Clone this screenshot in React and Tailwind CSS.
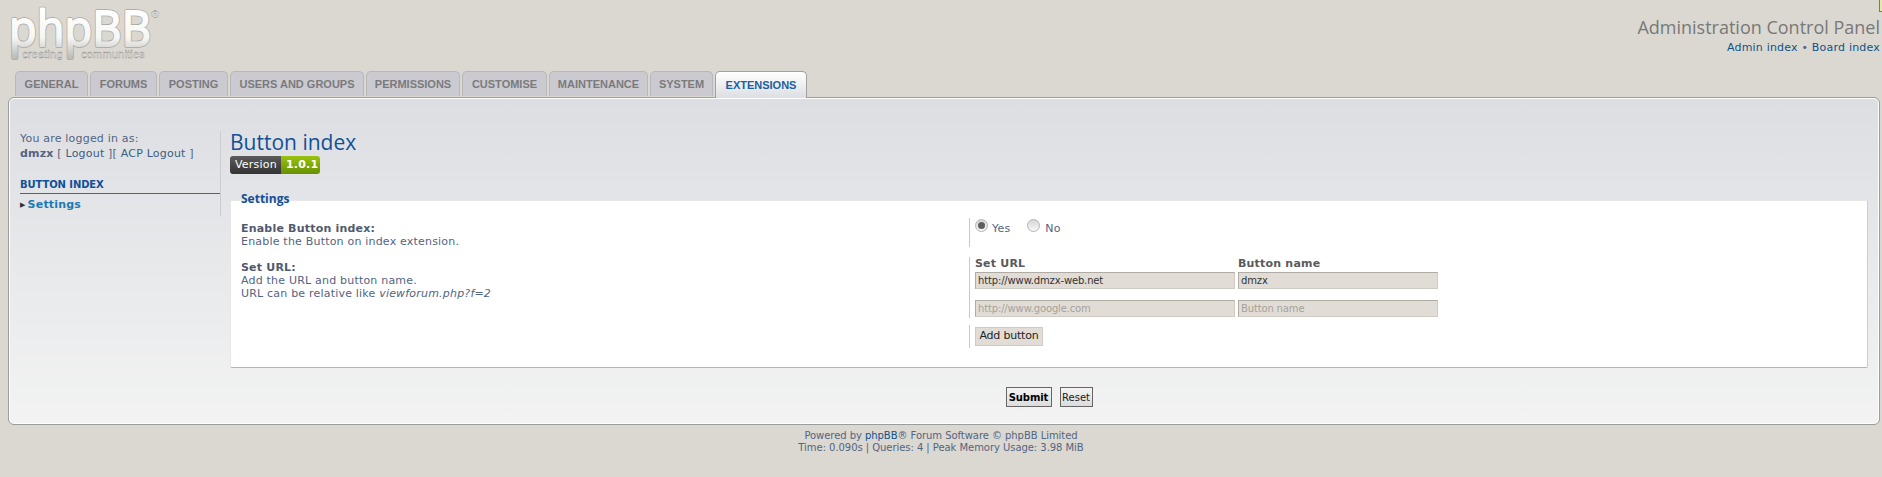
const tabs = [
  { label: 'GENERAL', w: 'w-[73px]' },
  { label: 'FORUMS', w: 'w-[67px]' },
  { label: 'POSTING', w: 'w-[69px]' },
  { label: 'USERS AND GROUPS', w: 'w-[134px]' },
  { label: 'PERMISSIONS', w: 'w-[94px]' },
  { label: 'CUSTOMISE', w: 'w-[85px]' },
  { label: 'MAINTENANCE', w: 'w-[99px]' },
  { label: 'SYSTEM', w: 'w-[63px]' },
];

function Logo() {
  const letters = { x: 8, y: 45, fontFamily: "'Open Sans', sans-serif", fontSize: 50, textLength: 142, lengthAdjust: 'spacingAndGlyphs' };
  const tag = { y: 57, fontFamily: "'Liberation Sans', sans-serif", fontSize: 11, fill: '#ffffff', stroke: '#8d8c88', strokeWidth: 0.4 };
  return (
    <svg width="170" height="62" viewBox="0 0 170 62" className="block">
      <defs>
        <linearGradient id="logoFill" gradientUnits="userSpaceOnUse" x1="0" y1="8" x2="0" y2="56">
          <stop offset="0" stopColor="#ffffff" />
          <stop offset="0.6" stopColor="#f6f6f5" />
          <stop offset="1" stopColor="#bdbdbb" />
        </linearGradient>
      </defs>
      <text {...letters} fill="none" stroke="#a8a7a2" strokeWidth="3.6" strokeLinejoin="round">phpBB</text>
      <text {...letters} fill="url(#logoFill)" stroke="url(#logoFill)" strokeWidth="2" strokeLinejoin="round">phpBB</text>
      <text x="150" y="17" fontFamily="'Liberation Sans', sans-serif" fontSize="11" fill="#ffffff" stroke="#a9a8a3" strokeWidth="0.3">®</text>
      <text {...tag} x="21">creating</text>
      <text {...tag} x="80">communities</text>
    </svg>
  );
}

function Radio({ checked }) {
  return (
    <span className="flex h-[13px] w-[13px] items-center justify-center rounded-full border border-[#b4b4b4] bg-gradient-to-b from-[#d6d6d6] to-[#f8f8f8]">
      {checked && <span className="h-[7px] w-[7px] rounded-full bg-[#5f5f5f]" />}
    </span>
  );
}

function TextBox({ value, width, muted }) {
  return (
    <div className={`flex h-[17px] items-center border border-t-[#b0aca4] border-l-[#b0aca4] border-r-[#cfcbc3] border-b-[#cfcbc3] bg-[#e1ddd6] px-[2px] text-[10px] tracking-[-0.15px] ${width} ${muted ? 'text-[#a5a29c]' : 'text-[#333333]'}`}>
      {value}
    </div>
  );
}

export default function App() {
  return (
    <div className="relative h-[477px] w-[1882px] overflow-hidden bg-[#dbd8d1] font-['DejaVu_Sans',sans-serif] text-[11px] tracking-[0.2px] text-[#536482]">
      <div className="absolute right-0 top-0 h-[12px] w-[3px] border-l border-b border-[#777777] bg-[#e8e8a0]" />

      <header className="flex h-[71px] justify-between pl-[1px] pr-[2px]">
        <div className="pt-[1px]"><Logo /></div>
        <div className="pt-[16px] text-right">
          <div className="font-['Open_Sans',sans-serif] text-[18px] leading-[22px] tracking-normal text-[#787878]">Administration Control Panel</div>
          <div className="mt-[3px] text-[11px] leading-[13px] text-[#105289]">Admin index <span className="text-[#536482]">•</span> Board index</div>
        </div>
      </header>

      <nav className="relative z-10 flex h-[26px] gap-[2px] pl-[15px]">
        {tabs.map((tab) => (
          <div key={tab.label} className={`flex h-[25px] items-center justify-center rounded-t-[5px] border border-b-0 border-[#b8b8b8] bg-[#cacad0] font-['Liberation_Sans',sans-serif] text-[11px] font-bold tracking-normal text-[#7a7a7d] ${tab.w}`}>
            {tab.label}
          </div>
        ))}
        <div className="flex h-[27px] w-[92px] items-center justify-center rounded-t-[5px] border border-b-0 border-[#a0a0a0] bg-gradient-to-b from-[#ffffff] to-[#dcdee2] font-['Liberation_Sans',sans-serif] text-[11px] font-bold tracking-normal text-[#1b5fa5]">
          EXTENSIONS
        </div>
      </nav>

      <main className="ml-[8px] mr-[2px] flex h-[328px] rounded-[6px] border border-[#9c9c9c] bg-gradient-to-b from-[#dcdee2] to-[#f3f3f3] pr-[11px] pt-[33px] shadow-[inset_0_0_0_1px_#ffffff]">
        <aside className="h-[85px] w-[212px] shrink-0 border-r border-[#c9ccd0] pl-[11px]">
          <div className="text-[11px] leading-[15px]">You are logged in as:</div>
          <div className="leading-[15px]">
            <span className="font-bold">dmzx</span> [ <span className="text-[#3c5d7f]">Logout</span> ][ <span className="text-[#3c5d7f]">ACP Logout</span> ]
          </div>
          <div className="mt-[17px] border-b border-[#2f6c9f] pb-[2px] text-[10px] font-bold leading-[13px] tracking-[-0.1px] text-[#115098]">BUTTON INDEX</div>
          <div className="mt-[3px] flex items-center gap-[2px] font-bold leading-[16px] text-[#1d7ab3]">
            <span className="text-[7px] text-[#333333]">▶</span>Settings
          </div>
        </aside>

        <section className="ml-[9px] min-w-0 flex-1">
          <h1 className="-mt-[2px] font-['Open_Sans',sans-serif] text-[21px] font-normal leading-[26px] tracking-normal text-[#115098]">Button index</h1>
          <div className="mt-[1px] flex h-[18px] w-[90px] overflow-hidden rounded-[3px] text-[11px] font-normal leading-[18px] text-white">
            <span className="w-[51px] bg-gradient-to-b from-[#5b5b5b] to-[#333333] pl-[5px]">Version</span>
            <span className="flex-1 bg-gradient-to-b from-[#9ac30e] to-[#679000] pl-[5px] font-bold">1.0.1</span>
          </div>

          <div className="relative mt-[26px] h-[168px] rounded-[2px] border border-b-[#b4b4b4] border-r-[#cdcdcd] border-t-[#e6e6e6] border-l-[#e6e6e6] bg-white">
            <div className="absolute -top-[10px] left-[10px] font-['Open_Sans',sans-serif] text-[12px] font-bold leading-[16px] tracking-normal text-[#115098]">Settings</div>

            <div className="flex pl-[10px] pt-[17px]">
              <div className="w-[728px] shrink-0 leading-[13px]">
                <div className="mt-[4px] font-bold text-[#4f5a6e]">Enable Button index:</div>
                <div>Enable the Button on index extension.</div>
                <div className="mt-[13px] font-bold text-[#4f5a6e]">Set URL:</div>
                <div>Add the URL and button name.</div>
                <div>URL can be relative like <em>viewforum.php?f=2</em></div>
              </div>

              <div className="min-w-0 flex-1">
                <div className="flex h-[29px] items-start border-l border-[#c9c9c9] pl-[5px] pt-[1px]">
                  <Radio checked />
                  <span className="ml-[4px] mr-[17px] mt-[3px] leading-[13px]">Yes</span>
                  <Radio />
                  <span className="ml-[5px] mt-[3px] leading-[13px]">No</span>
                </div>

                <div className="mt-[10px] h-[61px] border-l border-[#c9c9c9] pl-[5px]">
                  <div className="flex gap-[3px] font-bold leading-[14px] text-[#5a5a5a]">
                    <div className="w-[260px]">Set URL</div>
                    <div>Button name</div>
                  </div>
                  <div className="mt-[1px] flex gap-[3px]">
                    <TextBox value="http://www.dmzx-web.net" width="w-[260px]" />
                    <TextBox value="dmzx" width="w-[200px]" />
                  </div>
                  <div className="mt-[11px] flex gap-[3px]">
                    <TextBox value="http://www.google.com" width="w-[260px]" muted />
                    <TextBox value="Button name" width="w-[200px]" muted />
                  </div>
                </div>

                <div className="mt-[7px] h-[23px] border-l border-[#c9c9c9] pl-[5px] pt-[2px]">
                  <div className="flex h-[19px] w-[68px] items-center justify-center border border-[#cfcbc3] bg-[#e1ddd6] text-[11px] tracking-[-0.2px] text-[#222222]">Add button</div>
                </div>
              </div>
            </div>
          </div>

          <div className="mt-[19px] flex justify-center gap-[8px]">
            <div className="flex h-[20px] w-[46px] items-center justify-center border border-[#666666] bg-gradient-to-b from-[#f4f4f4] to-[#dcdcdc] text-[10px] font-bold tracking-[-0.1px] text-black">Submit</div>
            <div className="flex h-[20px] w-[33px] items-center justify-center border border-[#666666] bg-gradient-to-b from-[#f4f4f4] to-[#dcdcdc] text-[10px] tracking-normal text-[#222222]">Reset</div>
          </div>
        </section>
      </main>

      <footer className="mt-[5px] text-center text-[10px] leading-[12px] tracking-[-0.05px]">
        <div>Powered by <span className="text-[#105289]">phpBB</span>® Forum Software © phpBB Limited</div>
        <div>Time: 0.090s | Queries: 4 | Peak Memory Usage: 3.98 MiB</div>
      </footer>
    </div>
  );
}
